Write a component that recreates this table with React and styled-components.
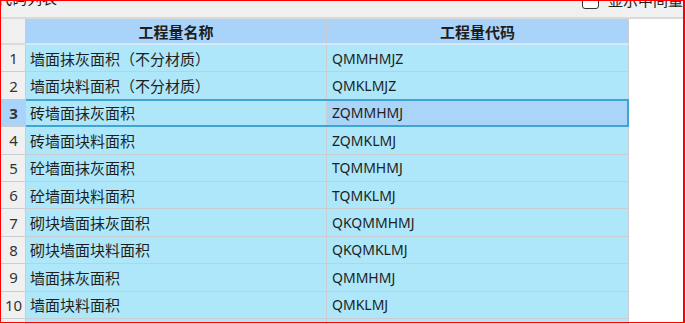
import React from 'react';
import styled, { createGlobalStyle } from 'styled-components';

const GlobalStyle = createGlobalStyle`
  html, body {
    margin: 0;
    padding: 0;
    background: #ffffff;
    overflow: hidden;
  }
  body {
    font-family: "Noto Sans", "Noto Sans CJK SC", sans-serif;
    color: #1e1e1e;
  }
`;

const rows = [
  { name: '墙面抹灰面积（不分材质）', code: 'QMMHMJZ' },
  { name: '墙面块料面积（不分材质）', code: 'QMKLMJZ' },
  { name: '砖墙面抹灰面积', code: 'ZQMMHMJ' },
  { name: '砖墙面块料面积', code: 'ZQMKLMJ' },
  { name: '砼墙面抹灰面积', code: 'TQMMHMJ' },
  { name: '砼墙面块料面积', code: 'TQMKLMJ' },
  { name: '砌块墙面抹灰面积', code: 'QKQMMHMJ' },
  { name: '砌块墙面块料面积', code: 'QKQMKLMJ' },
  { name: '墙面抹灰面积', code: 'QMMHMJ' },
  { name: '墙面块料面积', code: 'QMKLMJ' },
  { name: '', code: '' },
];

const SELECTED = 2;

const Frame = styled.div`
  position: relative;
  width: 685px;
  height: 324px;
  overflow: hidden;

  /* red annotation box drawn over the capture */
  &::after {
    content: '';
    position: absolute;
    left: 0;
    top: 0;
    width: 685px;
    height: 323px;
    box-sizing: border-box;
    border: 1px solid #ff0000;
    border-right-width: 2px;
    pointer-events: none;
  }
`;

const TopBar = styled.div`
  height: 17px;
  background: #f0f0f0;
  border-bottom: 2px solid #dadada;
  display: flex;
  align-items: flex-start;
  justify-content: space-between;
  font-family: "Noto Sans CJK SC", sans-serif;
  font-size: 15px;
  line-height: 20px;
`;

const PanelTitle = styled.div`
  margin: -12px 0 0 -3px;
`;

const ShowMiddle = styled.label`
  display: flex;
  align-items: center;
  gap: 9px;
  margin: -10px 2px 0 0;
  white-space: nowrap;
`;

const CheckBox = styled.span`
  width: 15px;
  height: 15px;
  border: 1px solid #333333;
  border-radius: 3px;
  background: #ffffff;
`;

const Table = styled.div`
  width: 629px;
  display: flex;
  flex-direction: column;
`;

const Row = styled.div`
  display: flex;
  height: ${(p) => (p.$header ? '26px' : '27.4px')};
  flex: none;
`;

const RowHead = styled.div`
  width: 26px;
  flex: none;
  box-sizing: border-box;
  border-right: 1px solid #c9cdd1;
  border-bottom: 1px solid #c9cdd1;
  background: ${(p) => (p.$selected ? '#a9d3f9' : '#f0f0f0')};
  display: flex;
  align-items: center;
  justify-content: center;
  font-size: 15px;
  font-weight: ${(p) => (p.$selected ? 700 : 400)};
  color: #333333;
  padding-left: 2px;
`;

const CellGroup = styled.div`
  position: relative;
  display: flex;
  flex: 1;

  &::after {
    content: '';
    display: ${(p) => (p.$selected ? 'block' : 'none')};
    position: absolute;
    left: 0;
    top: -1px;
    right: 0;
    bottom: 0;
    border: 2px solid #3ea5d3;
    border-left: none;
    pointer-events: none;
  }
`;

const Cell = styled.div`
  box-sizing: border-box;
  width: ${(p) => p.$width}px;
  flex: none;
  border-right: 1px solid #c9cdd1;
  border-bottom: 1px solid #c9cdd1;
  background: ${(p) => (p.$active ? '#aad5f9' : '#ade7f9')};
  display: flex;
  align-items: center;
  padding-left: 4px;
  font-family: "Noto Sans CJK SC", sans-serif;
  font-size: 15px;
  color: #1e1e1e;
  white-space: nowrap;
  overflow: hidden;
`;

const CodeCell = styled(Cell)`
  font-family: "Noto Sans", sans-serif;
  font-size: 14px;
  padding-left: 5px;
`;

const HeadCell = styled(Cell)`
  background: #a9d3f9;
  border-bottom: 2px solid #d6e9f8;
  justify-content: center;
  padding-left: 0;
  font-weight: 700;
`;

const HeadCorner = styled(RowHead)`
  border-bottom: 2px solid #dcdcdc;
`;

const App = () => {
  return (
    <Frame>
      <GlobalStyle />
      <TopBar>
        <PanelTitle>代码列表</PanelTitle>
        <ShowMiddle>
          <CheckBox />
          显示中间量
        </ShowMiddle>
      </TopBar>
      <Table>
        <Row $header>
          <HeadCorner />
          <CellGroup>
            <HeadCell $width={301}>工程量名称</HeadCell>
            <HeadCell $width={302}>工程量代码</HeadCell>
          </CellGroup>
        </Row>
        {rows.map((r, i) => (
          <Row key={i}>
            <RowHead $selected={i === SELECTED}>{r.name ? i + 1 : ''}</RowHead>
            <CellGroup $selected={i === SELECTED}>
              <Cell $width={301}>{r.name}</Cell>
              <CodeCell $width={302} $active={i === SELECTED}>{r.code}</CodeCell>
            </CellGroup>
          </Row>
        ))}
      </Table>
    </Frame>
  );
};

export default App;
